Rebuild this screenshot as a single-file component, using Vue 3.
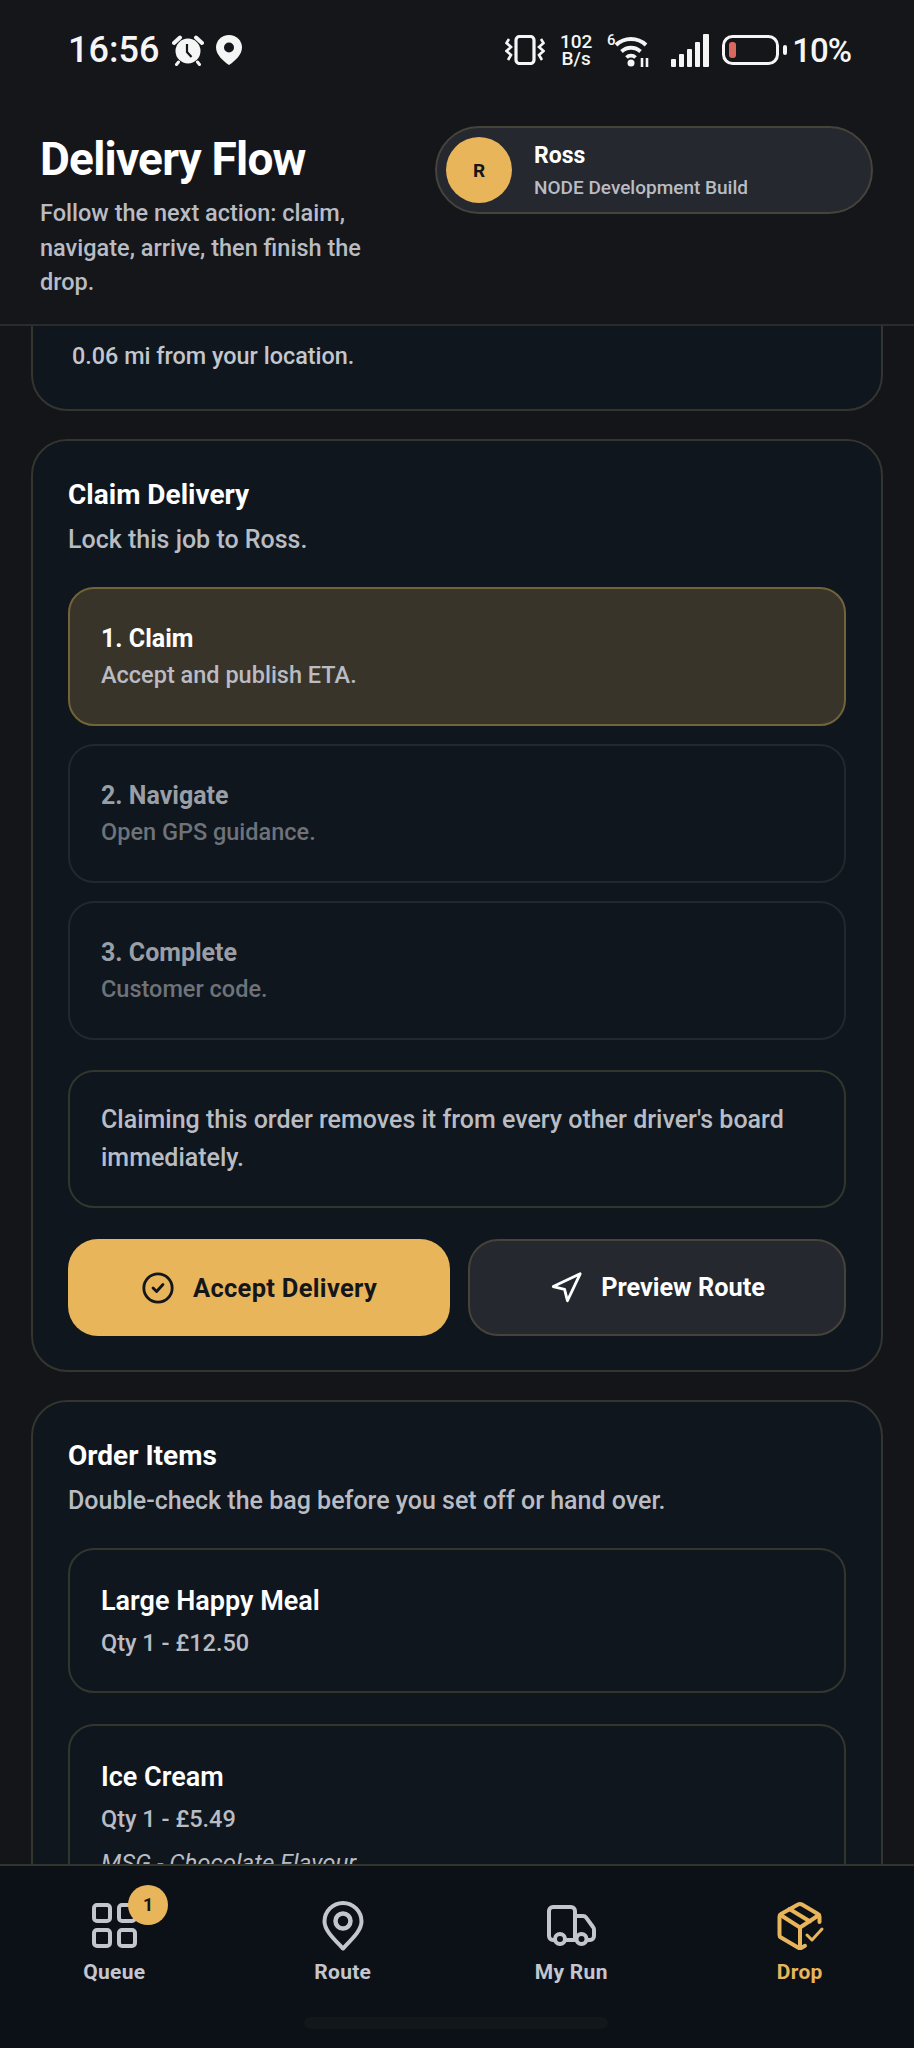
<template>
  <div class="screen">
    <header class="top">
      <div class="status">
        <span class="clock">16:56</span>
        <svg class="ic-alarm" viewBox="0 0 32 32">
          <circle cx="16" cy="17" r="12.5" fill="#f5f5f5" />
          <path d="M2 9 8 3.500M30 9l-6-5.500" stroke="#f5f5f5" stroke-width="4" stroke-linecap="round" fill="none" />
          <path d="M6.500 28 4.500 30.500M25.500 28l2 2.500" stroke="#f5f5f5" stroke-width="3" stroke-linecap="round" />
          <path d="M15 10v8l4.500 5" stroke="#14161a" stroke-width="2.200" fill="none" />
        </svg>
        <svg class="ic-pin" viewBox="0 0 28 32">
          <path d="M14 1C6.500 1 1 6.800 1 13.500 1 20.500 8 27 14 31c6-4 13-10.500 13-17.500C27 6.800 21.500 1 14 1Z" fill="#f5f5f5" />
          <circle cx="14" cy="13.500" r="5" fill="#14161a" />
        </svg>
        <span class="status-gap"></span>
        <svg class="ic-vib" viewBox="0 0 40 30" fill="none" stroke="#f5f5f5">
          <rect x="11" y="1.500" width="18" height="27" rx="3.500" stroke-width="3.200" />
          <path d="M4 4 1.500 8 6 12 1.500 16 6 20 3 25M36 4l2.500 4L34 12l4.500 4L34 20l3 5" stroke-width="2.600" />
        </svg>
        <span class="speed"><b>102</b><b>B/s</b></span>
        <svg class="ic-wifi" viewBox="0 0 44 34" fill="none" stroke="#f5f5f5">
          <text x="0" y="12" class="wifi-six">6</text>
          <path d="M9 12c8.500-8 21.500-8 30 0M14.500 18.500c5.500-5 13.500-5 19 0M19.500 24.500c2.500-2.500 6.500-2.500 9 0" stroke-width="3.800" />
          <circle cx="24" cy="30" r="3.500" fill="#f5f5f5" stroke="none" />
          <path d="M35 25v9M40 25v9" stroke-width="2.600" />
        </svg>
        <svg class="ic-signal" viewBox="0 0 38 33" fill="#f5f5f5">
          <rect x="0" y="25" width="5" height="8" rx="1" />
          <rect x="8" y="20" width="5" height="13" rx="1" />
          <rect x="16" y="15" width="5" height="18" rx="1" />
          <rect x="24" y="8" width="5" height="25" rx="1" />
          <rect x="32" y="0" width="6" height="33" rx="1" />
        </svg>
        <svg class="ic-batt" viewBox="0 0 65 30">
          <rect x="1.500" y="1.500" width="54" height="27" rx="9" fill="none" stroke="#f5f5f5" stroke-width="3" />
          <rect x="7" y="7" width="7" height="16" rx="3" fill="#d9695f" />
          <rect x="61" y="10" width="4" height="10" rx="2" fill="#f5f5f5" />
        </svg>
        <span class="pct">10%</span>
      </div>
      <div class="head-row">
        <div class="head-copy">
          <h1>Delivery Flow</h1>
          <p>Follow the next action: claim, navigate, arrive, then finish the drop.</p>
        </div>
        <div class="driver">
          <span class="avatar">R</span>
          <div>
            <div class="driver-name">Ross</div>
            <div class="driver-sub">NODE Development Build</div>
          </div>
        </div>
      </div>
    </header>

    <main class="content">
      <section class="card card-prev">
        <p class="distance">0.06 mi from your location.</p>
      </section>

      <section class="card">
        <h2>Claim Delivery</h2>
        <p class="card-sub">Lock this job to Ross.</p>
        <div class="steps">
          <div v-for="s in steps" :key="s.title" class="step" :class="{ active: s.active }">
            <div class="step-title">{{ s.title }}</div>
            <div class="step-sub">{{ s.sub }}</div>
          </div>
        </div>
        <div class="note">Claiming this order removes it from every other driver's board immediately.</div>
        <div class="actions">
          <button class="btn btn-primary">
            <svg viewBox="0 0 24 24" fill="none" stroke="currentColor" stroke-width="2" stroke-linecap="round" stroke-linejoin="round">
              <circle cx="12" cy="12" r="10" />
              <path d="m8.500 12 2.500 2.500 4.500-5" />
            </svg>
            Accept Delivery
          </button>
          <button class="btn btn-dark">
            <svg viewBox="0 0 24 24" fill="none" stroke="currentColor" stroke-width="2" stroke-linecap="round" stroke-linejoin="round">
              <path d="M3 11 22 2l-9 19-2-8-8-2Z" />
            </svg>
            Preview Route
          </button>
        </div>
      </section>

      <section class="card">
        <h2>Order Items</h2>
        <p class="card-sub">Double-check the bag before you set off or hand over.</p>
        <div class="items">
          <div v-for="i in items" :key="i.name" class="item">
            <div class="item-name">{{ i.name }}</div>
            <div class="item-qty">{{ i.qty }}</div>
            <div v-if="i.extra" class="item-extra">{{ i.extra }}</div>
          </div>
        </div>
      </section>
    </main>

    <nav class="tabs">
      <div class="tab">
        <span class="tab-icon">
          <svg viewBox="0 0 48 50" fill="none" stroke="currentColor" stroke-width="4" stroke-linejoin="round">
            <rect x="4" y="4" width="16" height="16" rx="3" />
            <rect x="29" y="4" width="16" height="16" rx="3" />
            <rect x="4" y="29" width="16" height="16" rx="3" />
            <rect x="29" y="29" width="16" height="16" rx="3" />
          </svg>
          <span class="badge">1</span>
        </span>
        <span>Queue</span>
      </div>
      <div class="tab">
        <span class="tab-icon">
          <svg viewBox="0 0 48 50" fill="none" stroke="currentColor" stroke-width="4" stroke-linejoin="round">
            <path d="M24 47.500C14 37 5.500 29 5.500 20.500a18.500 18.500 0 0 1 37 0C42.500 29 34 37 24 47.500Z" />
            <circle cx="24" cy="20" r="7.500" stroke-width="4.500" />
          </svg>
        </span>
        <span>Route</span>
      </div>
      <div class="tab">
        <span class="tab-icon">
          <svg viewBox="0 0 48 50" fill="none" stroke="currentColor" stroke-width="4" stroke-linecap="round" stroke-linejoin="round">
            <path d="M8 39H6a4 4 0 0 1-4-4V10a4 4 0 0 1 4-4h18a4 4 0 0 1 4 4v29" />
            <path d="M19 39h10" />
            <path d="M28 15h8a4 4 0 0 1 3.200 1.600l6.800 9.400a4 4 0 0 1 1 2.500V35a4 4 0 0 1-4 4h-2" />
            <circle cx="13" cy="38" r="5" />
            <circle cx="34.500" cy="38" r="5" />
          </svg>
        </span>
        <span>My Run</span>
      </div>
      <div class="tab current">
        <span class="tab-icon">
          <svg viewBox="0 0 48 50" fill="none" stroke="currentColor" stroke-width="4" stroke-linecap="round" stroke-linejoin="round">
            <path d="M43.500 21v-5.500a3 3 0 0 0-1.500-2.600L26 3.600a4 4 0 0 0-4 0L5 12.900a3 3 0 0 0-1.500 2.600V34a3 3 0 0 0 1.500 2.600L22 46.500a4 4 0 0 0 4 0l3-1.700" />
            <path d="M4.500 14 24 26.500 43 14M24 26.500V47M13.500 8 34 20.500" />
            <path d="m31 34 5 5 10-11" stroke-width="3" />
          </svg>
        </span>
        <span>Drop</span>
      </div>
    </nav>
    <div class="home-bar"></div>
  </div>
</template>

<script setup>
const steps = [
  { title: '1. Claim', sub: 'Accept and publish ETA.', active: true },
  { title: '2. Navigate', sub: 'Open GPS guidance.' },
  { title: '3. Complete', sub: 'Customer code.' }
]
const items = [
  { name: 'Large Happy Meal', qty: 'Qty 1 - £12.50' },
  { name: 'Ice Cream', qty: 'Qty 1 - £5.49', extra: 'MSG - Chocolate Flavour' }
]
</script>

<style>
html, body { margin: 0; background: #131519; }
</style>

<style scoped>
* { box-sizing: border-box; }
.screen {
  width: 914px;
  height: 2048px;
  display: flex;
  flex-direction: column;
  overflow: hidden;
  position: relative;
  background: #131519;
  color: #fff;
  font-family: Roboto, "Liberation Sans", sans-serif;
}

/* header */
.top {
  height: 326px;
  flex: none;
  background: #14161a;
  border-bottom: 2px solid #2a2c2c;
}
.status {
  display: flex;
  align-items: center;
  height: 36px;
  margin: 32px 63px 0 68px;
  color: #f5f5f5;
}
.clock { font-size: 36px; font-weight: 500; width: 104px; }
.ic-alarm { width: 32px; height: 32px; }
.ic-pin { width: 28px; height: 32px; margin-left: 11px; }
.status-gap { flex: 1; }
.ic-vib { width: 40px; height: 30px; }
.speed { display: flex; flex-direction: column; width: 36px; margin-left: 13px; font-size: 19px; line-height: 17px; text-align: center; }
.speed b { font-weight: 500; }
.ic-wifi { width: 44px; height: 34px; margin-left: 13px; }
.wifi-six { font-size: 15px; font-weight: 500; fill: #f5f5f5; stroke: none; }
.ic-signal { width: 38px; height: 33px; margin-left: 20px; }
.ic-batt { width: 65px; height: 30px; margin-left: 13px; }
.pct { font-size: 33px; font-weight: 500; margin-left: 5px; letter-spacing: -1px; }

.head-row {
  display: flex;
  justify-content: space-between;
  align-items: flex-start;
  margin-top: 58px;
  padding: 0 41px 0 40px;
}
.head-copy { width: 330px; }
h1 {
  margin: 8px 0 0;
  font-size: 46px;
  line-height: 50px;
  font-weight: 700;
  letter-spacing: -0.8px;
}
.head-copy p {
  margin: 12px 0 0;
  font-size: 23.500px;
  line-height: 34.500px;
  font-weight: 500;
  color: #b9bcc3;
}
.driver {
  width: 438px;
  height: 88px;
  display: flex;
  align-items: center;
  gap: 22px;
  padding: 0 9px;
  border: 2px solid #45433a;
  border-radius: 44px;
  background: #25282e;
}
.avatar {
  width: 66px;
  height: 66px;
  border-radius: 50%;
  background: #e8b55b;
  color: #14161a;
  font-size: 19px;
  font-weight: 700;
  display: flex;
  align-items: center;
  justify-content: center;
}
.driver-name { font-size: 23px; font-weight: 700; line-height: 30px; margin-top: 3px; }
.driver-sub { font-size: 19px; font-weight: 500; line-height: 28px; margin-top: 3px; color: #b9bcc3; }

/* scroll area */
.content {
  flex: 1;
  min-height: 0;
  overflow: hidden;
  display: flex;
  flex-direction: column;
  gap: 28px;
  padding: 0 31px;
}
.card {
  flex: none;
  padding: 33px 35px 34px;
  background: #0f161d;
  border: 2px solid #33352f;
  border-radius: 36px;
}
.card-prev { margin-top: -60px; height: 145px; padding: 70px 0 0 39px; }
.distance { margin: 0; font-size: 23.400px; line-height: 36px; font-weight: 500; color: #c3c6cc; }
h2 { margin: 1px 0 0; font-size: 28px; line-height: 40px; font-weight: 700; }
.card-sub { margin: 5px 0 0; font-size: 25px; line-height: 40px; font-weight: 500; color: #b9bcc3; }

.steps { display: flex; flex-direction: column; gap: 18px; margin-top: 27px; }
.step {
  height: 139px;
  padding: 0 31px;
  display: flex;
  flex-direction: column;
  justify-content: center;
  border: 2px solid #22282c;
  border-radius: 26px;
}
.step.active { background: #39342a; border-color: #736338; }
.step-title { font-size: 25px; line-height: 37px; font-weight: 700; color: #9a9ea6; }
.step-sub { font-size: 23.500px; line-height: 37px; font-weight: 500; color: #6e7279; }
.step.active .step-title { color: #fff; }
.step.active .step-sub { color: #b9bcc3; }

.note {
  margin-top: 30px;
  height: 138px;
  padding: 0 31px;
  display: flex;
  align-items: center;
  font-size: 25px;
  line-height: 38px;
  font-weight: 500;
  color: #b9bcc3;
  border: 2px solid #33352f;
  border-radius: 26px;
}
.actions { display: flex; gap: 18px; margin-top: 31px; }
.btn {
  height: 97px;
  display: flex;
  align-items: center;
  justify-content: center;
  gap: 18px;
  border-radius: 30px;
  font-family: inherit;
  font-size: 25.500px;
  font-weight: 700;
}
.btn svg { width: 34px; height: 34px; }
.btn-primary { flex: none; width: 382px; background: #e8b55b; border: 0; color: #14161a; letter-spacing: 0.3px; }
.btn-dark { flex: 1; font-size: 25.300px; background: #25282e; border: 2px solid #45433a; color: #fff; }

.items { display: flex; flex-direction: column; gap: 31px; margin-top: 27px; }
.item {
  padding: 31px 31px 30px;
  border: 2px solid #33352f;
  border-radius: 26px;
}
.item-name { font-size: 27px; line-height: 40px; font-weight: 600; }
.item-qty { font-size: 23.500px; line-height: 36px; margin-top: 4px; font-weight: 500; color: #b9bcc3; }
.item-extra { font-size: 24px; line-height: 36px; margin-top: 8px; font-style: italic; color: #b9bcc3; }

/* bottom nav */
.tabs {
  flex: none;
  height: 184px;
  display: grid;
  grid-template-columns: repeat(4, 1fr);
  padding: 35px 0 0;
  background: #0c1117;
  border-top: 2px solid #33352b;
}
.tab {
  display: flex;
  flex-direction: column;
  align-items: center;
  gap: 6px;
  height: 90px;
  font-size: 21px;
  line-height: 30px;
  font-weight: 700;
  letter-spacing: 0.3px;
  color: #c3c6cf;
}
.tab.current { color: #e8b55b; }
.tab-icon { position: relative; width: 48px; height: 50px; display: block; }
.tab-icon svg { width: 48px; height: 50px; display: block; overflow: visible; }
.badge {
  position: absolute;
  left: 38px;
  top: -16px;
  width: 40px;
  height: 40px;
  border-radius: 50%;
  background: #e8b55b;
  color: #14161a;
  font-size: 18px;
  font-weight: 700;
  display: flex;
  align-items: center;
  justify-content: center;
}
.home-bar {
  position: absolute;
  left: 304px;
  bottom: 19px;
  width: 304px;
  height: 12px;
  border-radius: 6px;
  background: #12171c;
}
</style>
